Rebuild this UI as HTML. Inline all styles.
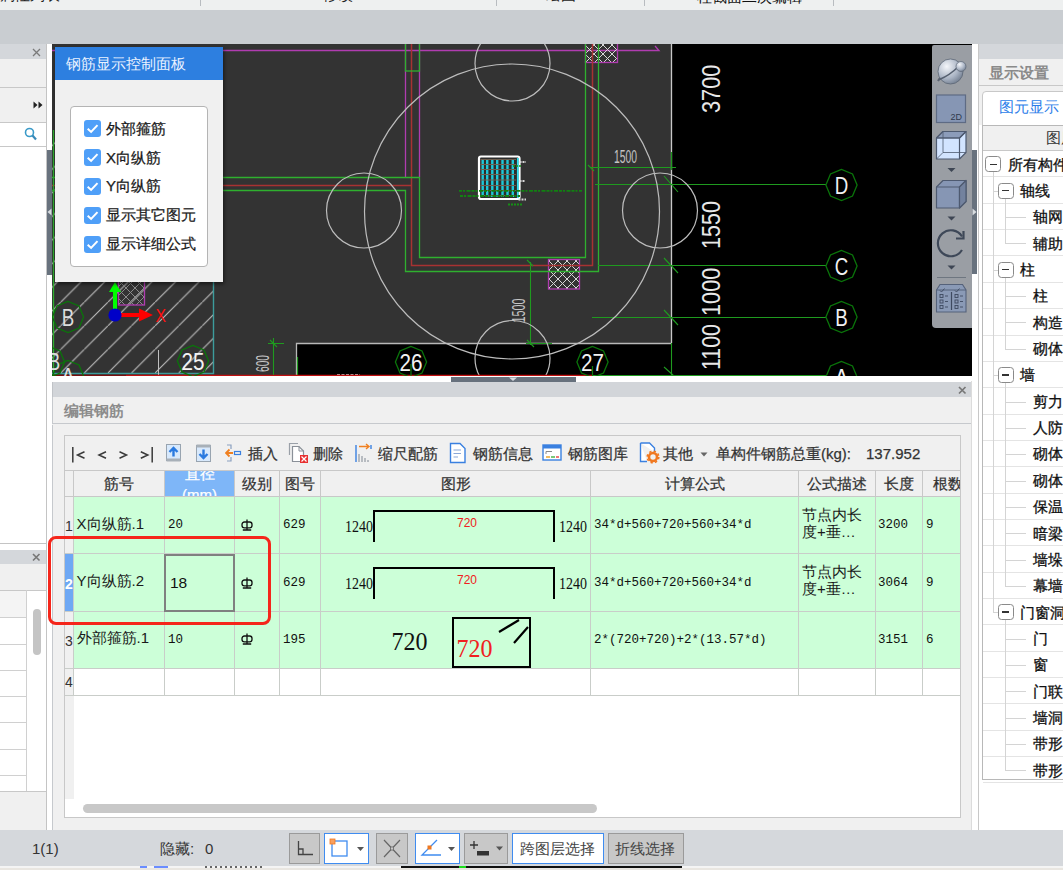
<!DOCTYPE html>
<html><head><meta charset="utf-8">
<style>
*{box-sizing:border-box;margin:0;padding:0}
html,body{width:1063px;height:870px;overflow:hidden;background:#f0f0f0;font-family:"Liberation Sans",sans-serif;font-size:13px;color:#222}
.a{position:absolute}
#topbar{left:0;top:0;width:1063px;height:11px;background:#eef0f0;border-bottom:1.500px solid #b4b8bc;overflow:hidden}
#topbar i{position:absolute;top:0;width:1px;height:6px;background:#b8bcc0}
#band{left:0;top:10px;width:1063px;height:34px;background:#c9cdd1}
/* left panel */
#left{left:0;top:44px;width:47px;height:786px;background:#fff;border-right:1px solid #c4c4c4}
#split1{left:47px;top:44px;width:5px;height:786px;background:#fff}
/* CAD */
#cad{left:52px;top:44px;width:920px;height:332.500px;background:#000;overflow:hidden}
#split2{left:972px;top:44px;width:6px;height:786px;background:#fff}
/* right panel */
#right{left:978px;top:44px;width:85px;height:786px;background:#fff;border-left:1px solid #c8c8c8;overflow:hidden}
/* bottom panel */
#bp{left:52px;top:376px;width:920px;height:454px;background:#f0f0f0}
#status{left:0;top:830px;width:1063px;height:36px;background:#d5d8dc}
#taskedge{left:0;top:866px;width:1063px;height:4px;background:#e9e6e1}

/* float panel */
#fp{left:55px;top:47px;width:168px;height:235px;background:#f0f0f0;box-shadow:1px 2px 4px rgba(0,0,0,.55)}
#fp .t{position:absolute;left:0;top:0;width:168px;height:33px;background:#2d7fe0;color:#eaf2ff;font-size:15px;line-height:33px;padding-left:11px;white-space:nowrap}
#fp .box{position:absolute;left:15px;top:59px;width:138px;height:161px;background:#fff;border:1px solid #b4b4b4;border-radius:4px}
#fp .r{position:absolute;left:13px;height:18px;white-space:nowrap;font-size:15px;line-height:18px;color:#1a1a1a}
#fp .r b{display:inline-block;vertical-align:top;width:17px;height:17px;border-radius:3px;background:#4f9ff8;margin-right:5px;margin-top:0.500px;position:relative}
#fp .r b svg{position:absolute;left:0;top:0}
/* nav toolbar */
#nav{left:932px;top:45px;width:40px;height:283px;background:#9a9ea4;border-radius:2px 0 0 4px;overflow:hidden}

/* bottom panel */
#bp .w{position:absolute;left:0;top:0;width:920px;height:6px;background:#fff}
#bp .th{position:absolute;left:399px;top:1px;width:125px;height:5px;background:#67717d}
#bp .gh{position:absolute;left:0;top:6px;width:920px;height:14.500px;background:#d2d5d9;border-left:1px solid #c0c3c7}
#bp .ti{position:absolute;left:0;top:20.500px;width:920px;height:27.500px;background:#f0f0f0;border:1px solid #c6c9cd;border-top:none;color:#8c8c8c;font-size:15px;font-weight:bold;line-height:27px;padding-left:11px}
#bp .lb{position:absolute;left:0;top:49px;width:1px;height:405px;background:#c6c9cd}
#bp .rb{position:absolute;left:919px;top:5px;width:1px;height:449px;background:#dcdcdc}
#tp{left:64px;top:435px;width:897px;height:383px;background:#fff;border:1px solid #c8c8c8;overflow:hidden}
#tb{position:absolute;left:0;top:0;width:895px;height:35px;background:#f0f0f0;border-bottom:1px solid #c8c8c8}
#tb span{position:absolute;top:0;line-height:36px;font-size:15px;color:#333;white-space:nowrap}
#tb svg{position:absolute}
#hd{position:absolute;left:0;top:35px;width:895px;height:26px;background:#f0f0f0;border-bottom:1px solid #c8c8c8}
#hd div{position:absolute;top:0;height:25px;line-height:25px;text-align:center;font-size:15px;color:#333;border-right:1px solid #c8c8c8;overflow:hidden;white-space:nowrap}
.row{position:absolute;left:0;width:895px;background:#ccffd8}
.row div{position:absolute;top:0;height:100%;border-right:1px solid #c9cdc9;border-bottom:1px solid #c9cdc9;white-space:nowrap;overflow:hidden}
.row .n{left:0;width:9px;background:#f0f0f0;color:#333;font-size:14px;text-align:center}
.mono{font-family:"Liberation Mono",monospace;font-size:12.500px;color:#111}
.cj{font-size:15px;color:#1a1a1a}

/* right panel */
#right .gh{position:absolute;left:0;top:0;width:85px;height:15px;background:#d4d7db}
#right .ti{position:absolute;left:0;top:15px;width:85px;height:27px;background:#f0f0f0;border-bottom:1px solid #c8c8c8;color:#8a8a8a;font-size:15px;font-weight:bold;line-height:27px;padding-left:10px;white-space:nowrap}
#right .tabbg{position:absolute;left:0;top:42px;width:85px;height:39px;background:#f0f0f0}
#right .tab{position:absolute;left:3px;top:47px;width:90px;height:35px;background:#fff;border:1px solid #c8c8c8;border-radius:4px 0 0 0;color:#2b7de9;font-size:15px;line-height:30px;padding-left:15.500px;white-space:nowrap}
#tree{position:absolute;left:3px;top:81px;width:90px;height:655px;border:1px solid #b8b8b8;background:#fff}
#tree .h{position:absolute;left:0;top:0;width:88px;height:25px;background:#f0f0f0;border-bottom:1px solid #c8c8c8;font-size:15px;line-height:24px;padding-left:63px;color:#333;white-space:nowrap}
#tree .r{-webkit-text-stroke:0.300px #111;margin-top:-0.800px;position:absolute;left:0;width:88px;height:26.350px;border-bottom:1px solid #e4e4e4;font-size:15px;line-height:26px;color:#111;white-space:nowrap}
#tree .bx{position:absolute;width:16px;height:16px;border:1px solid #8a8a8a;border-radius:3.500px;background:#fff}
#tree .bx:after{content:"";position:absolute;left:3.500px;top:6.300px;width:7px;height:1.500px;background:#333}
#tree .v{position:absolute;width:1px;background:#d8d8d8}
#tree .c{position:absolute;height:1px;background:#d0d0d0}
/* left panel */
#left .gh{position:absolute;left:0;top:0;width:46px;height:15px;background:#d4d7db}
#left .s1{position:absolute;left:0;top:15px;width:46px;height:29px;background:#f0f0f0;border-bottom:1px solid #c8c8c8}
#left .s2{position:absolute;left:0;top:44px;width:46px;height:35px;background:#f0f0f0;border-bottom:1px solid #c8c8c8}
#left .s3{position:absolute;left:0;top:79px;width:46px;height:24px;background:#fff;border-bottom:1px solid #c8c8c8}
#left .gh2{position:absolute;left:0;top:505.500px;width:46px;height:14.500px;background:#d4d7db}
#left .s4{position:absolute;left:0;top:520px;width:46px;height:27px;background:#f0f0f0;border-bottom:1px solid #c8c8c8}
#left .ln{position:absolute;left:0;width:26px;height:1px;background:#d0d0d0}
#status span{position:absolute;top:0;line-height:38px;font-size:15px;color:#333;white-space:nowrap}
.sb{position:absolute;top:3px;height:31px;border:1px solid #9a9a9a;background:#c8c8c8}
.sb.w{background:#fff;border-color:#3f8cf0}
.sb span{line-height:29px !important;color:#444 !important}
#hd div,#tb span,#fp .r{-webkit-text-stroke:0.250px currentColor}
</style></head><body>
<div class="a" id="topbar"><i style="left:200px"></i><i style="left:496px"></i><i style="left:644px"></i><i style="left:833px"></i><span style="position:absolute;left:0;top:-13px;font-size:15px;line-height:15px;color:#222;white-space:nowrap">属性列表</span><span style="position:absolute;left:323px;top:-13.500px;font-size:15px;line-height:15px;color:#222;white-space:nowrap">修改</span><span style="position:absolute;left:546px;top:-13px;font-size:15px;line-height:15px;color:#222;white-space:nowrap">绘图</span><span style="position:absolute;left:697px;top:-11.500px;font-size:15px;line-height:15px;color:#111;white-space:nowrap">柱截面二次编辑</span></div>
<div class="a" id="band"></div>
<div class="a" id="left"><div class="gh"><svg width="9" height="9" style="position:absolute;left:32px;top:4px"><path d="M1,1 L8,8 M8,1 L1,8" stroke="#7a7a7a" stroke-width="1.300"/></svg></div><div class="s1"></div><div class="s2"><svg width="10" height="8" style="position:absolute;left:33px;top:13px"><path d="M0.500,0.500 L4.500,4 L0.500,7.500 Z M5.500,0.500 L9.500,4 L5.500,7.500 Z" fill="#222"/></svg></div><div class="s3"><svg width="14" height="15" style="position:absolute;left:24px;top:4px"><circle cx="5.500" cy="5.500" r="4" fill="none" stroke="#3a9ac8" stroke-width="1.600"/><path d="M8.500,8.500 L12,12.500" stroke="#3a8ab8" stroke-width="2.200"/></svg></div><div style="position:absolute;left:0;top:499px;width:46px;height:1px;background:#c4c4c4"></div><div class="gh2"><svg width="9" height="9" style="position:absolute;left:32px;top:3px"><path d="M1,1 L7.500,7.500 M7.500,1 L1,7.500" stroke="#777" stroke-width="1.600"/></svg></div><div style="position:absolute;left:0;top:547px;width:26px;height:26px;background:#f4f4f4"></div><div class="ln" style="top:573px"></div><div class="s4"></div><div class="ln" style="top:599.5px"></div><div class="ln" style="top:626.0px"></div><div class="ln" style="top:652.0px"></div><div class="ln" style="top:678.0px"></div><div class="ln" style="top:704.5px"></div><div class="ln" style="top:731.0px"></div><div style="position:absolute;left:26px;top:546px;width:1px;height:201px;background:#d0d0d0"></div><div style="position:absolute;left:0;top:747px;width:46px;height:39px;background:#f0f0f0;border-top:1px solid #c8c8c8"></div><div style="position:absolute;left:33px;top:565px;width:8px;height:46px;background:#c4c4c4;border-radius:4px"></div></div>
<div class="a" id="split1"><div style="position:absolute;left:0;top:106px;width:5px;height:125px;background:#68727e"></div><svg width="5" height="8" style="position:absolute;left:0;top:164px"><path d="M4.500,0.500 L0.500,4 L4.500,7.500 Z" fill="#d8dce0"/></svg></div>
<div class="a" id="cad">
<svg width="920" height="332" viewBox="52 44 920 332" style="position:absolute;left:0;top:0" font-family="Liberation Sans, sans-serif">
<defs>
<pattern id="hatch" patternUnits="userSpaceOnUse" width="23.6" height="23.6" x="60.7" y="373">
<path d="M-1,24.6 L24.6,-1" stroke="#c4c4c4" stroke-width="1" fill="none"/>
</pattern>
<pattern id="xh" patternUnits="userSpaceOnUse" width="9" height="9">
<path d="M0,0 L9,9 M9,0 L0,9" stroke="#d8d8d8" stroke-width="1" fill="none"/>
</pattern>
<pattern id="xh2" patternUnits="userSpaceOnUse" width="9" height="9"><path d="M0,0 L9,9 M9,0 L0,9" stroke="#8c8c8c" stroke-width="1" fill="none"/></pattern>
</defs>
<rect x="52" y="44" width="920" height="332" fill="#000"/>
<path d="M52,44 H671 V343 H296 V376 H52 Z" fill="#333"/>
<!-- hatch region -->
<rect x="52" y="130" width="161" height="243" fill="url(#hatch)"/>
<path d="M213.5,130 V373.5 H52" stroke="#3c9c9c" stroke-width="1.4" fill="none"/>
<!-- light gray outlines -->
<path d="M296.5,376 V343.5 H671" stroke="#b8b8b8" stroke-width="1.3" fill="none"/>
<path d="M671.5,44 V343" stroke="#c8c8c8" stroke-width="1.3" fill="none"/>
<path d="M158.5,350 V376" stroke="#c0c0c0" stroke-width="1" fill="none"/>
<!-- magenta -->
<g stroke="#b03cb0" stroke-width="1.3" fill="none">
<path d="M52,50.5 H659 L655,46"/>
<path d="M405.5,44 V177 M419.5,44 V177"/>
<rect x="585.5" y="40" width="32" height="22.5" fill="url(#xh)"/>
<rect x="548.5" y="259.5" width="31" height="29.5" fill="url(#xh)"/>
<rect x="118.5" y="270" width="26" height="35" fill="url(#xh2)"/>
</g>
<!-- red lines -->
<g stroke="#a83232" stroke-width="1.5" fill="none">
<path d="M52,185.5 H411.5 M411.5,44 V265.5 H592.5 V44"/>
</g>
<!-- green lines -->
<g stroke="#2fb02f" stroke-width="1.3" fill="none">
<rect x="405.5" y="40" width="14" height="31"/>
<path d="M52,177.5 H419.5 V257.5 H585.5 V44"/>
<path d="M52,190.5 H405.5 V271.5 H598.5 V44"/>
<path d="M53.5,130 V376"/>
</g>
<!-- dimension greens -->
<g stroke="#1f9a1f" stroke-width="1.1" fill="none">
<path d="M590,167.5 H676 M671.5,152 V170"/>
<path d="M595,184.5 H826"/>
<path d="M598,265.5 H826"/>
<path d="M592,317.5 H826"/>
<path d="M560,375.5 H826"/>
<path d="M671.5,343 V376"/>
<path d="M664,176 L678,192 M664,258 L678,273 M664,310 L678,325 M664,367 L674,376"/>
<path d="M530.5,262 V345 M526,343.5 H552 M527,260 L533,266 M527,340 L534,347"/>
<path d="M273.5,338 V376 M268,343.5 H284 M270,340 L277,347"/>
<path d="M588,165 L594,171"/>
</g>
<!-- circles -->
<g stroke="#bdbdbd" stroke-width="1.2" fill="none">
<circle cx="512" cy="211.5" r="147.5"/>
<circle cx="364" cy="210.5" r="37.5"/>
<circle cx="660" cy="210.5" r="37.5"/>
<circle cx="512.5" cy="63.5" r="37.5"/>
<circle cx="512.5" cy="358" r="37.5"/>
</g>
<path d="M297.500,357 V376" stroke="#1f9a1f" stroke-width="1.200"/><path d="M337,375 H360" stroke="#e8e8e8" stroke-width="1.500" stroke-dasharray="3 1.500"/>
<!-- red bottom line -->
<path d="M52,375.5 H126" stroke="#7a1010" stroke-width="1.5"/>
<path d="M126,375.5 H592" stroke="#c01010" stroke-width="1.6"/>
<!-- white grid box -->
<rect x="479" y="156.500" width="40.500" height="42.500" rx="2" fill="#2c2c2c" stroke="#fff" stroke-width="2.200"/>
<g stroke="#1fc8d8" stroke-width="2.400">
<path d="M482.700,159 V197 M487.200,159 V197 M492.300,159 V197 M497.200,159 V197 M502.500,159 V197 M507.500,159 V197 M512.800,159 V197"/>
</g>
<path d="M517.800,158 V198" stroke="#30e0f0" stroke-width="1.800"/>
<g stroke="#6e6050" stroke-width="1.100">
<path d="M480.500,159.500 H516 M480.500,164.500 H516 M480.500,169.500 H516 M480.500,174.500 H516 M480.500,180 H516 M480.500,185.500 H516 M480.500,190.500 H516 M480.500,195.500 H516"/>
</g>
<g stroke="#128012" stroke-width="1.800" stroke-dasharray="3 1 2 1.500 4 1">
<path d="M459,190.800 H582 M460,196 H520"/>
</g>
<path d="M508,204.500 H522" stroke="#169016" stroke-width="2.200" stroke-dasharray="2 1"/>
<path d="M513,166 H521" stroke="#169016" stroke-width="1.600" stroke-dasharray="2 1"/>
<g stroke="#d8d8d8" stroke-width="2" stroke-dasharray="2 1"><path d="M519.500,162 H526 M519.500,181 H524.500 M518.500,199.500 H526"/></g>
<!-- dimension text -->
<g fill="#c4c4c4" font-size="18.500">
<text x="614" y="162.5" textLength="23" lengthAdjust="spacingAndGlyphs">1500</text>
<text transform="translate(524.5,322.5) rotate(-90)" textLength="24" lengthAdjust="spacingAndGlyphs">1500</text>
<text transform="translate(268.5,372) rotate(-90)" textLength="17" lengthAdjust="spacingAndGlyphs">600</text>
</g>
<g fill="#e8e8e8" font-size="26.5">
<text transform="translate(719.5,113) rotate(-90)" textLength="48.5" lengthAdjust="spacingAndGlyphs">3700</text>
<text transform="translate(719.5,249) rotate(-90)" textLength="48" lengthAdjust="spacingAndGlyphs">1550</text>
<text transform="translate(719.5,316) rotate(-90)" textLength="48.5" lengthAdjust="spacingAndGlyphs">1000</text>
<text transform="translate(719.5,370) rotate(-90)" textLength="46" lengthAdjust="spacingAndGlyphs">1100</text>
</g>
<!-- axis bubbles -->
<g stroke="#0a740a" stroke-width="1.300" fill="none" id="bub">
<polygon points="841.5,169.4 830.5,174.0 825.9,185.0 830.5,196.0 841.5,200.6 852.5,196.0 857.1,185.0 852.5,174.0"/>
<polygon points="841.5,250.4 830.5,255.0 825.9,266.0 830.5,277.0 841.5,281.6 852.5,277.0 857.1,266.0 852.5,255.0"/>
<polygon points="841.5,301.4 830.5,306.0 825.9,317.0 830.5,328.0 841.5,332.6 852.5,328.0 857.1,317.0 852.5,306.0"/>
<polygon points="841.5,361.4 830.5,366.0 825.9,377.0 830.5,388.0 841.5,392.6 852.5,388.0 857.1,377.0 852.5,366.0"/>
<polygon points="592.5,346.4 581.5,351.0 576.9,362.0 581.5,373.0 592.5,377.6 603.5,373.0 608.1,362.0 603.5,351.0"/>
<polygon points="411.0,346.4 400.0,351.0 395.4,362.0 400.0,373.0 411.0,377.6 422.0,373.0 426.6,362.0 422.0,351.0"/>
<polygon points="193.0,345.4 182.0,350.0 177.4,361.0 182.0,372.0 193.0,376.6 204.0,372.0 208.6,361.0 204.0,350.0"/>
<polygon points="68.0,301.4 57.0,306.0 52.4,317.0 57.0,328.0 68.0,332.6 79.0,328.0 83.6,317.0 79.0,306.0"/>
<polygon points="68.0,360.4 57.0,365.0 52.4,376.0 57.0,387.0 68.0,391.6 79.0,387.0 83.6,376.0 79.0,365.0"/>
<polygon points="49.0,346.4 38.0,351.0 33.4,362.0 38.0,373.0 49.0,377.6 60.0,373.0 64.6,362.0 60.0,351.0"/>
</g>
<g fill="#f2f2f2" font-size="23" text-anchor="middle">
<text x="841.5" y="193.500" textLength="13.500" lengthAdjust="spacingAndGlyphs">D</text>
<text x="841.5" y="274.500" textLength="13.500" lengthAdjust="spacingAndGlyphs">C</text>
<text x="841.5" y="325.500" textLength="12.500" lengthAdjust="spacingAndGlyphs">B</text>
<text x="841.5" y="385.500" textLength="14" lengthAdjust="spacingAndGlyphs">A</text>
<text x="592.5" y="370.500" textLength="23" lengthAdjust="spacingAndGlyphs">27</text>
<text x="411" y="370.500" textLength="23" lengthAdjust="spacingAndGlyphs">26</text>
<text x="193" y="369.500" textLength="23" lengthAdjust="spacingAndGlyphs">25</text>
<text x="68" y="325.500" fill="#dcdcdc" textLength="12.500" lengthAdjust="spacingAndGlyphs">B</text>
<text x="68" y="384.500" fill="#dcdcdc" textLength="14" lengthAdjust="spacingAndGlyphs">A</text>
<text x="54" y="370" fill="#dcdcdc" textLength="12.500" lengthAdjust="spacingAndGlyphs">B</text>
</g>
<path d="M411,364 V376 M592.5,366 V376" stroke="#0e7a0e" stroke-width="1.2"/>
<!-- UCS icon -->
<path d="M113,309 V292 H109 L115,282 L121,292 H117 V309 Z" fill="#00ff00"/>
<path d="M120,313 H139 V308.500 L153,315 L139,321.500 V317 H120 Z" fill="#ff0000"/>
<circle cx="115" cy="315" r="6.600" fill="#0000c8"/>
<text x="155.500" y="322" font-size="19" fill="#ff1010" textLength="10.500" lengthAdjust="spacingAndGlyphs">X</text>
</svg>

</div>
<div class="a" id="fp"><div class="t">钢筋显示控制面板</div><div class="box"><div class="r" style="top:12.500px"><b><svg width="17" height="17" viewBox="0.500 0.500 17 17"><path d="M4.200,9.200 L7.600,12.400 L14,5.600" stroke="#fff" stroke-width="2" fill="none"/></svg></b>外部箍筋</div><div class="r" style="top:41.500px"><b><svg width="17" height="17" viewBox="0.500 0.500 17 17"><path d="M4.200,9.200 L7.600,12.400 L14,5.600" stroke="#fff" stroke-width="2" fill="none"/></svg></b>X向纵筋</div><div class="r" style="top:70px"><b><svg width="17" height="17" viewBox="0.500 0.500 17 17"><path d="M4.200,9.200 L7.600,12.400 L14,5.600" stroke="#fff" stroke-width="2" fill="none"/></svg></b>Y向纵筋</div><div class="r" style="top:99px"><b><svg width="17" height="17" viewBox="0.500 0.500 17 17"><path d="M4.200,9.200 L7.600,12.400 L14,5.600" stroke="#fff" stroke-width="2" fill="none"/></svg></b>显示其它图元</div><div class="r" style="top:128px"><b><svg width="17" height="17" viewBox="0.500 0.500 17 17"><path d="M4.200,9.200 L7.600,12.400 L14,5.600" stroke="#fff" stroke-width="2" fill="none"/></svg></b>显示详细公式</div></div></div>
<div class="a" id="nav">
<svg width="40" height="283" viewBox="932 45 40 283" style="position:absolute;left:0;top:0" font-family="Liberation Sans, sans-serif">
<defs>
<radialGradient id="sp" cx="0.35" cy="0.3" r="0.8"><stop offset="0" stop-color="#f4f6fa"/><stop offset="0.6" stop-color="#aab4c4"/><stop offset="1" stop-color="#6a7688"/></radialGradient>
</defs>
<!-- orbit sphere -->
<path d="M942,76 A16,6.500 -32 0 0 938,81" fill="none" stroke="#5a6270" stroke-width="2"/>
<circle cx="950.500" cy="71.500" r="12.500" fill="url(#sp)" stroke="#5a6474" stroke-width="0.800"/>
<path d="M939.500,79.500 Q950,75 958,67" fill="none" stroke="#566070" stroke-width="1.500"/>
<circle cx="961" cy="66.500" r="5" fill="url(#sp)" stroke="#5a6474" stroke-width="0.700"/>
<!-- 2D -->
<rect x="936.500" y="95" width="29" height="27.500" fill="#8696b4" stroke="#5e6b84" stroke-width="1.200"/>
<text x="950.500" y="120" font-size="9" fill="#303a4e">2D</text>
<!-- wire cube -->
<g stroke="#4e5a70" stroke-width="1.200" fill="#d2e4ff" stroke-linejoin="round">
<path d="M936.500,138 L943,131.500 H966 V152.500 L959.500,159 H936.500 Z"/>
<path d="M936.500,138 L943,131.500 H966 L959.500,138 Z" fill="#8c9cba"/><path d="M936.500,138 H959.500 V159 M959.500,138 L966,131.500" fill="none"/>
<path d="M943,131.500 V152.500 H966 M943,152.500 L936.500,159" fill="none" stroke-width="0.800"/>
</g>
<path d="M947.500,168 H955.500 L951.500,172 Z" fill="#3e4654"/>
<!-- solid cube -->
<g stroke="#4e5a70" stroke-width="1.200" stroke-linejoin="round">
<path d="M936.500,187 L943,180.500 H966 V201.500 L959.500,208 H936.500 Z" fill="#8696b4"/>
<path d="M936.500,187 H959.500 V208 M959.500,187 L966,180.500" fill="none"/>
<path d="M959.500,187 L966,180.500 V201.500 L959.500,208 Z" fill="#73829e"/>
</g>
<path d="M947.500,216.500 H955.500 L951.500,220.500 Z" fill="#3e4654"/>
<!-- rotate -->
<path d="M962,236.500 A13,13 0 1 0 962,250" fill="none" stroke="#3e4858" stroke-width="2.200"/>
<path d="M956,238.500 H963.500 V231" fill="none" stroke="#3e4858" stroke-width="2.200"/>
<path d="M947.500,265.500 H955.500 L951.500,269.500 Z" fill="#3e4654"/>
<path d="M937,277.500 H966" stroke="#6e7680" stroke-width="1"/>
<!-- checklist -->
<path d="M936.500,290 L940,284.500 H962.500 L966,290 V312 H936.500 Z" fill="#8a9ab6" stroke="#55627a" stroke-width="1.100"/>
<path d="M936.500,290 H966" stroke="#55627a" stroke-width="1"/>
<path d="M951.500,292 V310" stroke="#3e4a60" stroke-width="1.200"/><path d="M940,290.500 L941.500,292 L944.500,288.500 M955,290.500 L956.500,292 L959.500,288.500" stroke="#3e4a60" stroke-width="0.900" fill="none"/>
<g fill="none" stroke="#3e4a60" stroke-width="0.900">
<rect x="940" y="294.500" width="3" height="3"/><rect x="940" y="300" width="3" height="3"/><rect x="940" y="305.500" width="3" height="3"/>
<rect x="955" y="294.500" width="3" height="3"/><rect x="955" y="300" width="3" height="3"/><rect x="955" y="305.500" width="3" height="3"/>
<path d="M945,296 H948 M945,301.500 H948 M945,307 H948 M960,296 H963 M960,301.500 H963 M960,307 H963"/>
</g>
</svg></div>
<div class="a" id="split2"><div style="position:absolute;left:0;top:106px;width:5px;height:124px;background:#68727e"></div><svg width="5" height="8" style="position:absolute;left:0;top:164px"><path d="M0.500,0.500 L4.500,4 L0.500,7.500 Z" fill="#d8dce0"/></svg></div>
<div class="a" id="right"><div class="gh"></div><div class="ti">显示设置</div><div class="tabbg"></div><div class="tab">图元显示</div><div id="tree"><div class="h">图层</div><div class="r" style="top:25.90px"><span style="position:absolute;left:25px;top:0.500px">所有构件</span></div><div class="r" style="top:52.25px"><span style="position:absolute;left:37px;top:0.500px">轴线</span></div><div class="r" style="top:78.60px"><span style="position:absolute;left:50px;top:0.500px">轴网</span></div><div class="r" style="top:104.95px"><span style="position:absolute;left:50px;top:0.500px">辅助</span></div><div class="r" style="top:131.30px"><span style="position:absolute;left:37px;top:0.500px">柱</span></div><div class="r" style="top:157.65px"><span style="position:absolute;left:50px;top:0.500px">柱</span></div><div class="r" style="top:184.00px"><span style="position:absolute;left:50px;top:0.500px">构造</span></div><div class="r" style="top:210.35px"><span style="position:absolute;left:50px;top:0.500px">砌体</span></div><div class="r" style="top:236.70px"><span style="position:absolute;left:37px;top:0.500px">墙</span></div><div class="r" style="top:263.05px"><span style="position:absolute;left:50px;top:0.500px">剪力</span></div><div class="r" style="top:289.40px"><span style="position:absolute;left:50px;top:0.500px">人防</span></div><div class="r" style="top:315.75px"><span style="position:absolute;left:50px;top:0.500px">砌体</span></div><div class="r" style="top:342.10px"><span style="position:absolute;left:50px;top:0.500px">砌体</span></div><div class="r" style="top:368.45px"><span style="position:absolute;left:50px;top:0.500px">保温</span></div><div class="r" style="top:394.80px"><span style="position:absolute;left:50px;top:0.500px">暗梁</span></div><div class="r" style="top:421.15px"><span style="position:absolute;left:50px;top:0.500px">墙垛</span></div><div class="r" style="top:447.50px"><span style="position:absolute;left:50px;top:0.500px">幕墙</span></div><div class="r" style="top:473.85px"><span style="position:absolute;left:37px;top:0.500px">门窗洞</span></div><div class="r" style="top:500.20px"><span style="position:absolute;left:50px;top:0.500px">门</span></div><div class="r" style="top:526.55px"><span style="position:absolute;left:50px;top:0.500px">窗</span></div><div class="r" style="top:552.90px"><span style="position:absolute;left:50px;top:0.500px">门联</span></div><div class="r" style="top:579.25px"><span style="position:absolute;left:50px;top:0.500px">墙洞</span></div><div class="r" style="top:605.60px"><span style="position:absolute;left:50px;top:0.500px">带形</span></div><div class="r" style="top:631.95px"><span style="position:absolute;left:50px;top:0.500px">带形</span></div><div class="v" style="left:10px;top:46.3px;height:440.4px;background:#d4d4d4"></div><div class="c" style="left:10px;top:64.7px;width:5px;background:#d4d4d4"></div><div class="v" style="left:22px;top:72.7px;height:45.2px;background:#d4d4d4"></div><div class="c" style="left:22px;top:91.0px;width:21px;background:#d4d4d4"></div><div class="c" style="left:22px;top:117.4px;width:21px;background:#d4d4d4"></div><div class="c" style="left:10px;top:143.7px;width:5px;background:#d4d4d4"></div><div class="v" style="left:22px;top:151.7px;height:71.5px;background:#d4d4d4"></div><div class="c" style="left:22px;top:170.1px;width:21px;background:#d4d4d4"></div><div class="c" style="left:22px;top:196.4px;width:21px;background:#d4d4d4"></div><div class="c" style="left:22px;top:222.8px;width:21px;background:#d4d4d4"></div><div class="c" style="left:10px;top:249.1px;width:5px;background:#d4d4d4"></div><div class="v" style="left:22px;top:257.1px;height:203.3px;background:#d4d4d4"></div><div class="c" style="left:22px;top:275.5px;width:21px;background:#d4d4d4"></div><div class="c" style="left:22px;top:301.8px;width:21px;background:#d4d4d4"></div><div class="c" style="left:22px;top:328.2px;width:21px;background:#d4d4d4"></div><div class="c" style="left:22px;top:354.5px;width:21px;background:#d4d4d4"></div><div class="c" style="left:22px;top:380.9px;width:21px;background:#d4d4d4"></div><div class="c" style="left:22px;top:407.2px;width:21px;background:#d4d4d4"></div><div class="c" style="left:22px;top:433.5px;width:21px;background:#d4d4d4"></div><div class="c" style="left:22px;top:459.9px;width:21px;background:#d4d4d4"></div><div class="c" style="left:10px;top:486.2px;width:5px;background:#d4d4d4"></div><div class="v" style="left:22px;top:494.2px;height:150.6px;background:#d4d4d4"></div><div class="c" style="left:22px;top:512.6px;width:21px;background:#d4d4d4"></div><div class="c" style="left:22px;top:539.0px;width:21px;background:#d4d4d4"></div><div class="c" style="left:22px;top:565.3px;width:21px;background:#d4d4d4"></div><div class="c" style="left:22px;top:591.7px;width:21px;background:#d4d4d4"></div><div class="c" style="left:22px;top:618.0px;width:21px;background:#d4d4d4"></div><div class="c" style="left:22px;top:644.4px;width:21px;background:#d4d4d4"></div><div class="bx" style="left:2.0px;top:30.3px"></div><div class="bx" style="left:14.5px;top:56.7px"></div><div class="bx" style="left:14.5px;top:135.7px"></div><div class="bx" style="left:14.5px;top:241.1px"></div><div class="bx" style="left:14.5px;top:478.2px"></div></div></div></div>
<div class="a" id="bp"><div class="w"><div class="th"></div><svg width="10" height="4" style="position:absolute;left:456px;top:1px"><path d="M1,0.500 H9 L5,4 Z" fill="#d8dce0"/></svg></div>
<div class="gh"><svg width="9" height="9" style="position:absolute;left:904.500px;top:3.500px"><path d="M1,1 L7.500,7.500 M7.500,1 L1,7.500" stroke="#777" stroke-width="1.700"/></svg></div>
<div class="ti">编辑钢筋</div><div class="lb"></div><div class="rb"></div></div>

<div class="a" id="tp"><div id="tb"><svg width="90" height="20" viewBox="70 445 90 20" style="left:5px;top:9px"><g stroke="#3a3a3a" stroke-width="1.500" fill="none"><path d="M72.800,447 V462.500 M152.200,447 V462.500"/><path d="M84.500,451.800 L77.500,455 L84.500,458.200 M106,451.800 L99,455 L106,458.200 M119.500,451.800 L126.500,455 L119.500,458.200 M140.800,451.800 L147.800,455 L140.800,458.200"/></g></svg><svg width="17" height="19" style="left:101px;top:8px"><rect x="0.500" y="0.500" width="14" height="16" fill="#d8e9fc" stroke="#98a4b0" stroke-width="1"/><rect x="0.500" y="14.500" width="14" height="3" fill="#a8b0b8"/><path d="M7.500,12.500 V4.500 M3.500,8 L7.500,4 L11.500,8" stroke="#2a7ae0" stroke-width="2.400" fill="none"/></svg><svg width="17" height="19" style="left:131px;top:8px"><rect x="0.500" y="1.500" width="14" height="16" fill="#d8e9fc" stroke="#98a4b0" stroke-width="1"/><rect x="0.500" y="0.500" width="14" height="3" fill="#a8b0b8"/><path d="M7.500,5.500 V13.500 M3.500,10 L7.500,14 L11.500,10" stroke="#2a7ae0" stroke-width="2.400" fill="none"/></svg><svg width="18" height="22" style="left:160px;top:6px"><path d="M2,3 H6 V7 M2,19 H6 V15" stroke="#8aa0c0" stroke-width="1.200" fill="none"/><path d="M1,11 H8 M4.500,7.500 L1,11 L4.500,14.500" stroke="#f08020" stroke-width="1.800" fill="none"/><rect x="9.500" y="9.500" width="6" height="3" fill="none" stroke="#3a80e0" stroke-width="1.200"/></svg><span style="left:183px">插入</span><svg width="22" height="22" style="left:223px;top:6px"><path d="M1.500,13 V1.500 H10" stroke="#9aa0a8" stroke-width="1.200" fill="none"/><path d="M4.500,4.500 H11 L15.500,9 V19.500 H4.500 Z" fill="#fff" stroke="#8a9098" stroke-width="1.200"/><path d="M11,4.500 V9 H15.500" fill="none" stroke="#8a9098" stroke-width="1"/><rect x="12" y="13" width="8" height="8" fill="#e83030"/><path d="M13.500,14.500 L18.500,19.500 M18.500,14.500 L13.500,19.500" stroke="#fff" stroke-width="1.200"/></svg><span style="left:248px">删除</span><svg width="20" height="22" style="left:289px;top:6px"><path d="M2,3 V20" stroke="#3a80e0" stroke-width="1.400"/><path d="M5,4.500 H15 M12,2 L15,4.500 L12,7" stroke="#f08020" stroke-width="1.400" fill="none"/><path d="M17,3 V7" stroke="#3a80e0" stroke-width="1.400"/><path d="M5,20 V12 M8,20 V14 M11,20 V16 M14,20 V18" stroke="#9aa0a8" stroke-width="1.300"/></svg><span style="left:313px">缩尺配筋</span><svg width="18" height="22" style="left:384px;top:6px"><path d="M1.500,1.500 H11 L16,6.500 V20.500 H1.500 Z" fill="#fff" stroke="#3a80e0" stroke-width="1.400"/><path d="M4.500,8 H12 M4.500,11.500 H12 M4.500,15 H9" stroke="#8aa8d8" stroke-width="1.200"/></svg><span style="left:408px">钢筋信息</span><svg width="21" height="19" style="left:477px;top:8px"><rect x="1" y="1" width="18" height="15" fill="#fff" stroke="#3a80e0" stroke-width="1.400"/><rect x="1" y="1" width="18" height="3.500" fill="#3a80e0"/><path d="M4,10 V7.500 H10" stroke="#888" stroke-width="1" fill="none"/><path d="M4,13 H8" stroke="#e8a020" stroke-width="1.400"/><path d="M9,13 H13" stroke="#40b040" stroke-width="1.400"/><path d="M14,13 H17" stroke="#e84040" stroke-width="1.400"/></svg><span style="left:503px">钢筋图库</span><svg width="22" height="23" style="left:574px;top:5px"><path d="M1.500,2 H10.500 L15.500,7 V11 M8,20.500 H1.500 V2" fill="#fff" stroke="#3a80e0" stroke-width="1.400"/><circle cx="14" cy="16" r="4" fill="none" stroke="#f07820" stroke-width="2.600"/><circle cx="14" cy="16" r="5.800" fill="none" stroke="#f07820" stroke-width="1.600" stroke-dasharray="2.300 2.250"/></svg><span style="left:598px">其他</span><svg width="8" height="5" style="left:635px;top:16px"><path d="M0.500,0.500 H7.500 L4,4.500 Z" fill="#666"/></svg><span style="left:651px">单构件钢筋总重(kg):</span><span style="left:801px">137.952</span></div><div id="hd"><div style="left:0px;width:9px"></div><div style="left:9px;width:91px">筋号</div><div style="left:100px;width:70px;background:#7eb6f8;color:#fff;font-size:15px"><span style="position:absolute;left:0;width:69px;top:-7px;line-height:20px">直径</span><span style="position:absolute;left:0;width:69px;top:13.500px;line-height:20px">(mm)</span></div><div style="left:170px;width:45px">级别</div><div style="left:215px;width:41px">图号</div><div style="left:256px;width:270px">图形</div><div style="left:526px;width:208px">计算公式</div><div style="left:734px;width:77px">公式描述</div><div style="left:811px;width:47px">长度</div><div style="left:858px;width:49px;border-right:none">根数</div></div><div class="row" style="top:61px;height:57px;"><div class="n" style="line-height:59px;">1</div><div style="left:9px;width:91px"><span class="cj" style="position:absolute;left:2.500px;top:-2px;line-height:57px;">X向纵筋.1</span></div><div style="left:100px;width:70px"><span class="mono" style="position:absolute;left:3px;top:0;line-height:57px;">20</span></div><div style="left:170px;width:45px"><svg width="14" height="13" viewBox="0 0 14 13" style="position:absolute;left:4.500px;top:22px"><rect x="2" y="3" width="10" height="5.800" rx="2.400" fill="none" stroke="#111" stroke-width="1.300"/><path d="M7,0.500 V11 M2.800,11 H11.200" stroke="#111" stroke-width="1.300"/></svg></div><div style="left:215px;width:41px"><span class="mono" style="position:absolute;left:3px;top:0;line-height:57px;">629</span></div><div style="left:256px;width:270px"><svg width="270" height="57" style="position:absolute;left:0;top:0" font-family="Liberation Serif, serif"><path d="M53,45 V14 H233 V45" fill="none" stroke="#000" stroke-width="2"/><text x="24" y="35.300" font-size="16" fill="#111" textLength="28" lengthAdjust="spacingAndGlyphs">1240</text><text x="238" y="35.300" font-size="16" fill="#111" textLength="28" lengthAdjust="spacingAndGlyphs">1240</text><text x="136" y="30" font-size="12.500" fill="#f02020" font-family="Liberation Sans, sans-serif" textLength="20" lengthAdjust="spacingAndGlyphs">720</text></svg></div><div style="left:526px;width:208px"><span class="mono" style="position:absolute;left:3px;top:0;line-height:57px;">34*d+560+720+560+34*d</span></div><div style="left:734px;width:77px"><span class="cj" style="position:absolute;left:3px;top:8.500px;line-height:17.500px">节点内长<br>度+垂…</span></div><div style="left:811px;width:47px"><span class="mono" style="position:absolute;left:2px;top:0;line-height:57px;">3200</span></div><div style="left:858px;width:38px"><span class="mono" style="position:absolute;left:3px;top:0;line-height:57px;">9</span></div></div><div class="row" style="top:118px;height:58px;"><div class="n" style="line-height:60px;background:#6ea8f4;color:#fff;font-weight:bold;">2</div><div style="left:9px;width:91px"><span class="cj" style="position:absolute;left:2.500px;top:-2px;line-height:58px;">Y向纵筋.2</span></div><div style="left:100px;width:70px"><span class="mono" style="position:absolute;left:5px;top:0;line-height:58px;font-family:Liberation Sans,sans-serif;font-size:15.500px">18</span></div><div style="left:170px;width:45px"><svg width="14" height="13" viewBox="0 0 14 13" style="position:absolute;left:4.500px;top:23px"><rect x="2" y="3" width="10" height="5.800" rx="2.400" fill="none" stroke="#111" stroke-width="1.300"/><path d="M7,0.500 V11 M2.800,11 H11.200" stroke="#111" stroke-width="1.300"/></svg></div><div style="left:215px;width:41px"><span class="mono" style="position:absolute;left:3px;top:0;line-height:58px;">629</span></div><div style="left:256px;width:270px"><svg width="270" height="57" style="position:absolute;left:0;top:0" font-family="Liberation Serif, serif"><path d="M53,45 V14 H233 V45" fill="none" stroke="#000" stroke-width="2"/><text x="24" y="35.300" font-size="16" fill="#111" textLength="28" lengthAdjust="spacingAndGlyphs">1240</text><text x="238" y="35.300" font-size="16" fill="#111" textLength="28" lengthAdjust="spacingAndGlyphs">1240</text><text x="136" y="30" font-size="12.500" fill="#f02020" font-family="Liberation Sans, sans-serif" textLength="20" lengthAdjust="spacingAndGlyphs">720</text></svg></div><div style="left:526px;width:208px"><span class="mono" style="position:absolute;left:3px;top:0;line-height:58px;">34*d+560+720+560+34*d</span></div><div style="left:734px;width:77px"><span class="cj" style="position:absolute;left:3px;top:8.500px;line-height:17.500px">节点内长<br>度+垂…</span></div><div style="left:811px;width:47px"><span class="mono" style="position:absolute;left:2px;top:0;line-height:58px;">3064</span></div><div style="left:858px;width:38px"><span class="mono" style="position:absolute;left:3px;top:0;line-height:58px;">9</span></div></div><div class="row" style="top:176px;height:57px;"><div class="n" style="line-height:59px;">3</div><div style="left:9px;width:91px"><span class="cj" style="position:absolute;left:2.500px;top:-2px;line-height:56px;">外部箍筋.1</span></div><div style="left:100px;width:70px"><span class="mono" style="position:absolute;left:3px;top:0;line-height:56px;">10</span></div><div style="left:170px;width:45px"><svg width="14" height="13" viewBox="0 0 14 13" style="position:absolute;left:4.500px;top:21px"><rect x="2" y="3" width="10" height="5.800" rx="2.400" fill="none" stroke="#111" stroke-width="1.300"/><path d="M7,0.500 V11 M2.800,11 H11.200" stroke="#111" stroke-width="1.300"/></svg></div><div style="left:215px;width:41px"><span class="mono" style="position:absolute;left:3px;top:0;line-height:56px;">195</span></div><div style="left:256px;width:270px"><svg width="270" height="57" style="position:absolute;left:0;top:0" font-family="Liberation Serif, serif"><rect x="132" y="6" width="77" height="49" fill="none" stroke="#000" stroke-width="2"/><path d="M178,20 L198,8 M193,31 L207,15" stroke="#000" stroke-width="2.200"/><text x="70.500" y="38" font-size="25" fill="#111" textLength="36" lengthAdjust="spacingAndGlyphs">720</text><text x="135.500" y="45" font-size="25" fill="#f02020" textLength="36" lengthAdjust="spacingAndGlyphs">720</text></svg></div><div style="left:526px;width:208px"><span class="mono" style="position:absolute;left:3px;top:0;line-height:56px;">2*(720+720)+2*(13.57*d)</span></div><div style="left:734px;width:77px"></div><div style="left:811px;width:47px"><span class="mono" style="position:absolute;left:2px;top:0;line-height:56px;">3151</span></div><div style="left:858px;width:38px"><span class="mono" style="position:absolute;left:3px;top:0;line-height:56px;">6</span></div></div><div class="row" style="top:233px;height:27px;background:#fff;"><div class="n" style="line-height:27px;">4</div><div style="left:9px;width:91px"></div><div style="left:100px;width:70px"></div><div style="left:170px;width:45px"></div><div style="left:215px;width:41px"></div><div style="left:256px;width:270px"></div><div style="left:526px;width:208px"></div><div style="left:734px;width:77px"></div><div style="left:811px;width:47px"></div><div style="left:858px;width:38px"></div></div><div style="position:absolute;left:99px;top:117.500px;width:71px;height:58px;border:2px solid #808080"></div><div style="position:absolute;left:0;top:260px;width:9px;height:103px;background:#f0f0f0"></div><div style="position:absolute;left:18px;top:368px;width:514px;height:9px;border-radius:5px;background:#c8c8c8"></div></div>
<div class="a" style="left:48px;top:536px;width:223px;height:89px;border:3.500px solid #f5261b;border-radius:8px"></div>
<div class="a" id="status"><span style="left:32px">1(1)</span><span style="left:160px">隐藏:</span><span style="left:205px">0</span><div class="sb" style="left:289px;width:31px"><svg width="17" height="15" style="position:absolute;left:7px;top:7px"><path d="M1.500,0 V13.500 H16 M1.500,8 H6 V13.500" stroke="#444" stroke-width="1.300" fill="none"/></svg></div><div class="sb w" style="left:324px;width:45px"><svg width="40" height="27" style="position:absolute;left:2px;top:1px"><rect x="5" y="6" width="15" height="15" fill="none" stroke="#3f8cf0" stroke-width="1.300"/><rect x="3" y="4" width="5" height="5" fill="#f8a060" stroke="#f07820" stroke-width="0.800"/><path d="M30,12 H37 L33.500,16 Z" fill="#555"/></svg></div><div class="sb" style="left:376px;width:32px"><svg width="30" height="29" style="position:absolute;left:0;top:0"><path d="M7,6 L23,23 M23,6 L7,23" stroke="#666" stroke-width="1.200"/><rect x="13.500" y="13" width="3" height="3" fill="#c8c8c8" stroke="#666" stroke-width="0.800"/></svg></div><div class="sb w" style="left:415px;width:45px"><svg width="40" height="27" style="position:absolute;left:2px;top:1px"><path d="M19,5 L4,20 H23" fill="none" stroke="#3f8cf0" stroke-width="1.300"/><rect x="9.500" y="10.500" width="4" height="4" fill="#f07820"/><path d="M30,12 H37 L33.500,16 Z" fill="#555"/></svg></div><div class="sb" style="left:464px;width:44px"><svg width="42" height="29" style="position:absolute;left:0;top:0"><path d="M5,11 H13 M9,7 V15" stroke="#333" stroke-width="1.300"/><rect x="12" y="17" width="12" height="4.500" fill="#333"/><path d="M31,12.500 H38 L34.500,16.500 Z" fill="#555"/></svg></div><div class="sb w" style="left:512px;width:92px"><span style="left:7px">跨图层选择</span></div><div class="sb" style="left:608px;width:76px"><span style="left:6px">折线选择</span></div></div>
<div class="a" id="taskedge"><div style="position:absolute;left:0;top:0;width:1063px;height:1.500px;background:#f4f4f4"></div><div style="position:absolute;left:401px;top:0;width:281px;height:1.500px;background:#111"></div><div style="position:absolute;left:459px;top:0;width:7px;height:1.500px;background:#20e020"></div><div style="position:absolute;left:140px;top:0;width:7px;height:1.500px;background:#6a8cff"></div><div style="position:absolute;left:154px;top:0;width:14px;height:1.500px;background:#6a8cff"></div><div style="position:absolute;left:205px;top:0;width:60px;height:1.500px;background:repeating-linear-gradient(90deg,#666 0 2px,#f4f4f4 2px 5px)"></div></div>
</body></html>
